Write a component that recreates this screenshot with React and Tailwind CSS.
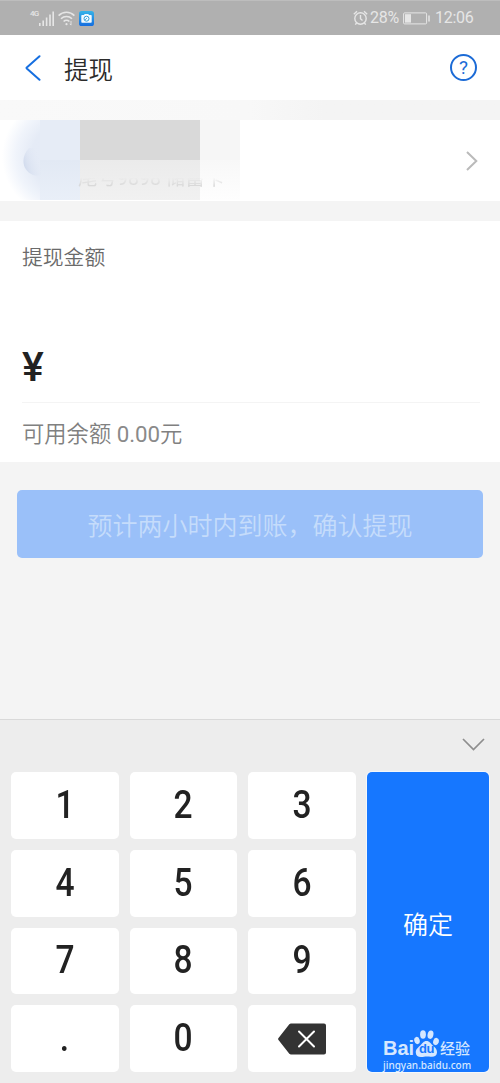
const keys = ['1', '2', '3', '4', '5', '6', '7', '8', '9', '.', '0', 'del']

function StatusBar() {
  return (
    <div className="flex h-[35px] items-center justify-between border-t border-[#bdbdbd] bg-[#b0b0b0] pl-[30px] pr-[26px] text-[#e6e6e6]">
      <div className="flex items-center">
        <span className="-mt-2 w-[9px] font-['Roboto',sans-serif] text-[8px] font-medium leading-none tracking-[-0.8px]">4G</span>
        <svg width="16" height="15" viewBox="0 0 16 15" fill="currentColor">
          <rect x="0" y="12" width="1.6" height="3" />
          <rect x="3.4" y="9.5" width="1.6" height="5.5" />
          <rect x="6.8" y="6.5" width="1.6" height="8.5" />
          <rect x="10.2" y="3.5" width="1.6" height="11.5" />
          <rect x="13.4" y="0.5" width="1.6" height="14.5" />
        </svg>
        <svg className="ml-[3px]" width="17" height="15" viewBox="0 0 17 15" fill="none" stroke="currentColor" strokeWidth="1.6">
          <path d="M0.6 4.6C5 .2 12 .2 16.4 4.6" />
          <path d="M3 7.7c3-3 8-3 11 0" />
          <path d="M5.6 10.5c1.6-1.5 4.2-1.5 5.8 0" />
          <circle cx="8.5" cy="13.2" r="1.1" fill="currentColor" stroke="none" />
          <path d="M13 10v4M11.8 12.8l1.2 1.4" strokeWidth="0.9" />
        </svg>
        <svg className="ml-1" width="15" height="15" viewBox="0 0 15 15">
          <defs>
            <linearGradient id="cam" x1="0" y1="0" x2="0" y2="1">
              <stop offset="0" stopColor="#36b3e8" />
              <stop offset="1" stopColor="#146de0" />
            </linearGradient>
          </defs>
          <rect width="15" height="15" rx="2.6" fill="url(#cam)" />
          <path d="M3 4h2l.7-1h3.6l.7 1h2q.7 0 .7.7v6.4q0 .7-.7.7H3q-.7 0-.7-.7V4.7q0-.7.7-.7z" fill="#f2faff" />
          <circle cx="7.5" cy="7.7" r="2.5" fill="none" stroke="#359fd9" />
          <path d="M6 9l2-2" stroke="#359fd9" strokeWidth="0.8" />
        </svg>
      </div>

      <div className="flex items-center font-['Roboto',sans-serif] text-[16px] font-normal">
        <svg width="15" height="16" viewBox="0 0 15 16" fill="none" stroke="currentColor" strokeWidth="1.4">
          <circle cx="7.5" cy="8.5" r="5.7" />
          <path d="M7.5 5v3.8l2 1.8M.8 4.2L4 1.3M14.2 4.2L11 1.3M3.6 13l-1.3 1.6M11.4 13l1.3 1.6" />
        </svg>
        <span className="ml-[2px] w-[30px] tracking-[-0.3px]">28%</span>
        <svg className="ml-[3px]" width="27" height="13" viewBox="0 0 27 13" fill="none" stroke="currentColor">
          <rect x="0.6" y="0.9" width="23" height="11" rx="1" />
          <rect x="2" y="2.2" width="6" height="8.4" fill="currentColor" stroke="none" />
          <path d="M26 3.5v6" strokeWidth="1.5" />
        </svg>
        <span className="ml-[5px] w-[39px] tracking-[-0.3px]">12:06</span>
      </div>
    </div>
  )
}

function BankCardRow() {
  return (
    <div className="relative flex h-[81px] items-center justify-end bg-white pr-[22px]">
      {/* mosaic over the card info */}
      <div className="absolute left-0 top-0 grid h-20 w-60 grid-cols-[80px_120px_40px] grid-rows-2">
        <div className="row-span-2 bg-[radial-gradient(ellipse_70px_64px_at_90%_46%,#e3eaf6_0%,#e5ebf6_58%,#f0f4fb_80%,#ffffff_100%)]" />
        <div className="bg-[#d9d9d9]" />
        <div className="bg-[#f6f6f6]" />
        <div className="bg-linear-to-b from-[#ebebeb] to-[#f1f1f1]" />
        <div className="bg-linear-to-b from-[#f8f8f8] to-[#fefefe]" />
      </div>
      <div className="absolute left-[40px] top-0 h-10 w-10 bg-[#e6ecf6]" />
      <div className="absolute left-[40px] top-10 h-10 w-10 bg-linear-to-b from-[#e2e9f4] to-[#e9eff8]" />
      <svg className="absolute left-[22px] top-[26px]" width="20" height="31" viewBox="0 0 20 31">
        <defs>
          <linearGradient id="moon" x1="0" y1="0.7" x2="0.9" y2="0.3">
            <stop offset="0" stopColor="#cfd9ec" />
            <stop offset="1" stopColor="#e4eaf6" stopOpacity="0" />
          </linearGradient>
        </defs>
        <path d="M7 2C-1 10-1 24 11 29q4 1 8 0V2z" fill="url(#moon)" />
      </svg>
      <span className="absolute left-[78px] top-[45px] whitespace-nowrap font-['Roboto','Noto_Sans_CJK_SC',sans-serif] text-[19.5px] font-normal leading-[28px] text-[#d4d4d4] mask-[linear-gradient(to_bottom,transparent_45%,black_80%)]">尾号9898 储蓄卡</span>
      <svg width="12" height="20" viewBox="0 0 12 20" fill="none" stroke="#bababa" strokeWidth="2">
        <path d="M1 1l9.3 9L1 19" />
      </svg>
    </div>
  )
}

function Watermark() {
  return (
    <div className="absolute bottom-0 left-[16px] w-[92px] text-[#d5e7ff]">
      <div className="flex h-[29px] items-end">
        <span className="w-[31px] whitespace-nowrap pb-px font-['Liberation_Sans',sans-serif] text-[20px] font-bold leading-[17px]">Bai</span>
        <div className="relative h-[29px] w-[25px]">
          <svg width="25" height="29" viewBox="0 0 25 29" fill="currentColor">
            <ellipse cx="3" cy="11.5" rx="2.7" ry="3.7" transform="rotate(-15 3 11.5)" />
            <ellipse cx="9" cy="5.5" rx="2.9" ry="4.2" />
            <ellipse cx="16.5" cy="5.7" rx="2.9" ry="4.2" transform="rotate(12 16.5 5.7)" />
            <ellipse cx="22" cy="12.5" rx="2.8" ry="3.7" transform="rotate(15 22 12.5)" />
            <path d="M12.5 12c3 0 4 2.3 6 4.3 2.2 2 4.7 3.7 4.5 7.2-.2 3.3-2.6 4.5-5.5 4.3-2-.2-3-.4-5-.4s-3 .4-5 .5c-3.2.2-5.5-1-5.7-4.2-.2-3.5 2.5-5.2 4.7-7.4 2-2 3-4.300 6-4.300z" />
          </svg>
          <span className="absolute left-[5px] top-[13px] font-['Liberation_Sans',sans-serif] text-[13px] font-bold leading-[14px] tracking-[-0.5px] text-[#1677ff]">du</span>
        </div>
        <span className="ml-px whitespace-nowrap pb-px font-['Noto_Sans_CJK_SC',sans-serif] text-[15px] font-medium leading-[18px]">经验</span>
      </div>
      <div className="whitespace-nowrap font-['Noto_Sans',sans-serif] text-[10px] font-medium leading-[14px]">jingyan.baidu.com</div>
    </div>
  )
}

function Keyboard() {
  return (
    <div className="h-[364px] border-t border-[#d9d9d9] bg-[#ededed] pl-[11px] pr-[11px]">
      <div className="flex h-[52px] items-center justify-end pr-1">
        <svg width="23" height="13" viewBox="0 0 23 13" fill="none" stroke="#8e8e8e" strokeWidth="1.7" className="-mt-[3px]">
          <path d="M1 1l10.5 10.5L22 1" />
        </svg>
      </div>
      <div className="flex h-[300px] gap-[11px]">
        <div className="grid w-[345px] grid-cols-3 grid-rows-4 gap-[11px]">
          {keys.map(key => (
            <button key={key} className="flex items-center justify-center rounded-[5px] bg-white font-['Roboto',sans-serif] text-[39px] font-medium leading-none text-[#222]">
              {key === 'del' ? (
                <svg width="48" height="32" viewBox="0 0 48 32">
                  <path d="M13 .5h33q2 0 2 2v27q0 2-2 2H13q-1 0-1.7-.8L.5 17q-.8-1 0-2L11.3 1.3q.7-.8 1.7-.8z" fill="#333" />
                  <path d="M21 8.5l15 15M36 8.5l-15 15" stroke="#fff" strokeWidth="2" strokeLinecap="round" />
                </svg>
              ) : (
                <span className="scale-x-[.86]">{key}</span>
              )}
            </button>
          ))}
        </div>
        <div className="relative flex flex-1 items-center justify-center rounded-[5px] bg-[#1677ff] shadow-[0_0_0_1px_#f3f7fb]">
          <span className="pt-[3px] font-['Noto_Sans_CJK_SC',sans-serif] text-[25px] font-[350] text-white">确定</span>
          <Watermark />
        </div>
      </div>
    </div>
  )
}

export default function App() {
  return (
    <div className="flex h-[1083px] w-[500px] flex-col overflow-hidden bg-[#f4f4f4] font-['Noto_Sans_CJK_SC',sans-serif] font-[350]">
      <StatusBar />

      {/* Header */}
      <div className="flex h-[65px] items-center bg-white pl-[25px] pr-[23px]">
        <svg width="16" height="26" viewBox="0 0 16 26" fill="none" stroke="#166fe0" strokeWidth="2" strokeLinecap="round" strokeLinejoin="round">
          <path d="M14.5 1.2L1.8 12.5q-.5.5 0 1L14.5 24.8" />
        </svg>
        <h1 className="ml-[23px] flex-1 pt-[3px] text-[24.5px] font-[350] leading-none text-[#2b2b2b]">提现</h1>
        <div className="flex h-[27px] w-[27px] items-center justify-center rounded-full border-2 border-[#1c6bd6] font-['Roboto',sans-serif] text-[19px] font-normal leading-none text-[#1c6bd6]">?</div>
      </div>

      <div className="h-5 bg-linear-to-r from-[#f9f9f9] via-[#f8f8f8] via-50% to-[#f4f4f4] to-65%" />
      <BankCardRow />

      {/* Amount */}
      <div className="mt-5 h-[241px] bg-white pl-[22px] pr-5">
        <p className="h-[121px] pt-[25px] text-[20.8px] leading-[21px] text-[#6a6a6a]">提现金额</p>
        <div className="flex h-[61px] items-center border-b border-[#f4f4f4]">
          <span className="mt-[-10px] font-['Roboto',sans-serif] text-[41px] font-medium leading-none text-[#222]">¥</span>
        </div>
        <p className="pt-[20px] font-['Roboto','Noto_Sans_CJK_SC',sans-serif] text-[22.3px] leading-[22px] text-[#808080]">
          可用余额 <span className="font-normal text-[#8a8a8a]">0.00</span>元
        </p>
      </div>

      <button className="mx-[17px] mt-[28px] h-[68px] w-[466px] rounded-[5px] bg-[#9ac0f9] pt-[2px] text-[25px] text-[#c5dcfb]">预计两小时内到账，确认提现</button>

      <div className="mt-auto">
        <Keyboard />
      </div>
    </div>
  )
}
